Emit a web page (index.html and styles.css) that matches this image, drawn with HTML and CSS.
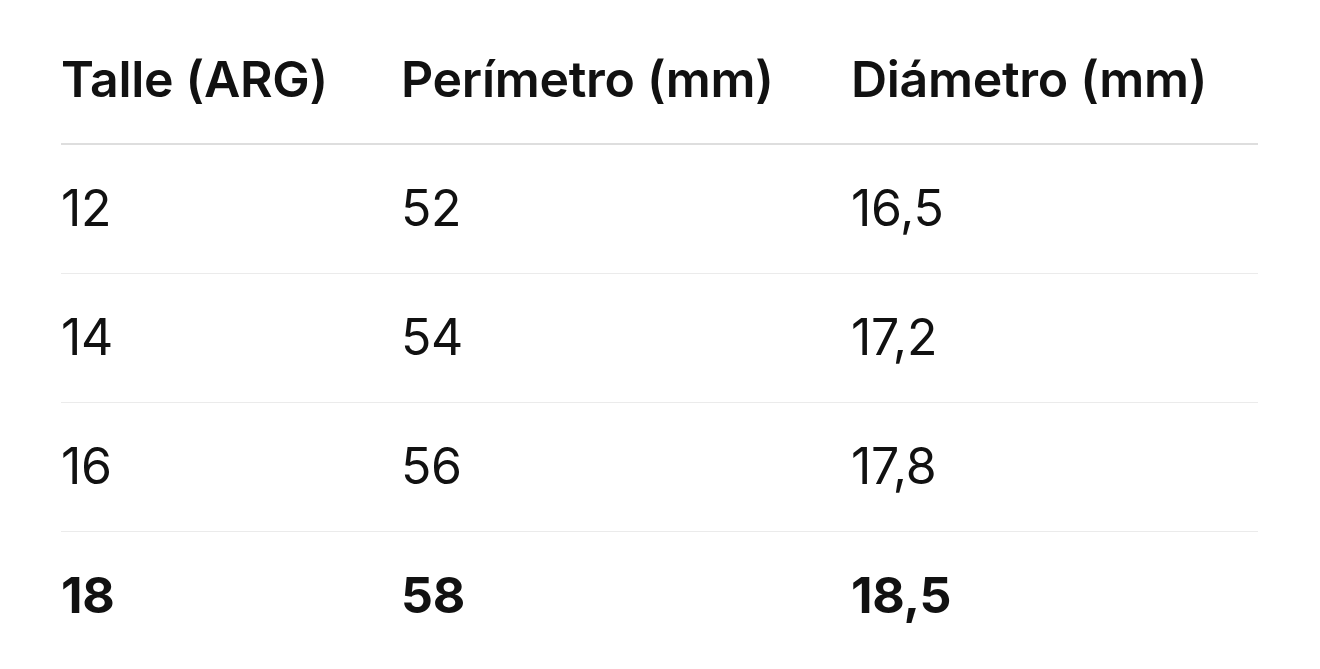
FILE: index.html
```html
<!DOCTYPE html>
<html lang="es">
<head>
<meta charset="utf-8">
<title>Talles</title>
<link rel="stylesheet" href="styles.css">
</head>
<body>
<div class="sizes">
  <div class="row head">
    <div class="cell">Talle (ARG)</div>
    <div class="cell">Perímetro (mm)</div>
    <div class="cell">Diámetro (mm)</div>
  </div>
  <div class="row">
    <div class="cell">12</div>
    <div class="cell">52</div>
    <div class="cell">16,5</div>
  </div>
  <div class="row">
    <div class="cell">14</div>
    <div class="cell">54</div>
    <div class="cell">17,2</div>
  </div>
  <div class="row">
    <div class="cell">16</div>
    <div class="cell">56</div>
    <div class="cell">17,8</div>
  </div>
  <div class="row last">
    <div class="cell">18</div>
    <div class="cell">58</div>
    <div class="cell">18,5</div>
  </div>
</div>
</body>
</html>
```
FILE: styles.css
```css
html, body {
  margin: 0;
  padding: 0;
  background: #ffffff;
}
body {
  font-family: Inter, "Liberation Sans", sans-serif;
  color: #111111;
}
.sizes {
  padding: 15px 0 0 61px;
  width: 1197px;
}
.row {
  display: grid;
  grid-template-columns: 340px 450px 1fr;
  align-items: center;
  height: 128px;
  border-bottom: 1px solid #ebebeb;
  font-size: 50px;
  font-weight: 400;
  letter-spacing: -0.3px;
}
.row .cell {
  padding-bottom: 2px;
}
.row.head {
  font-weight: 600;
  border-bottom: 2px solid #dedede;
}
.row.head .cell {
  padding-bottom: 0;
}
.row.last {
  border-bottom: none;
  font-weight: 700;
}
.cell {
  white-space: nowrap;
}
```
